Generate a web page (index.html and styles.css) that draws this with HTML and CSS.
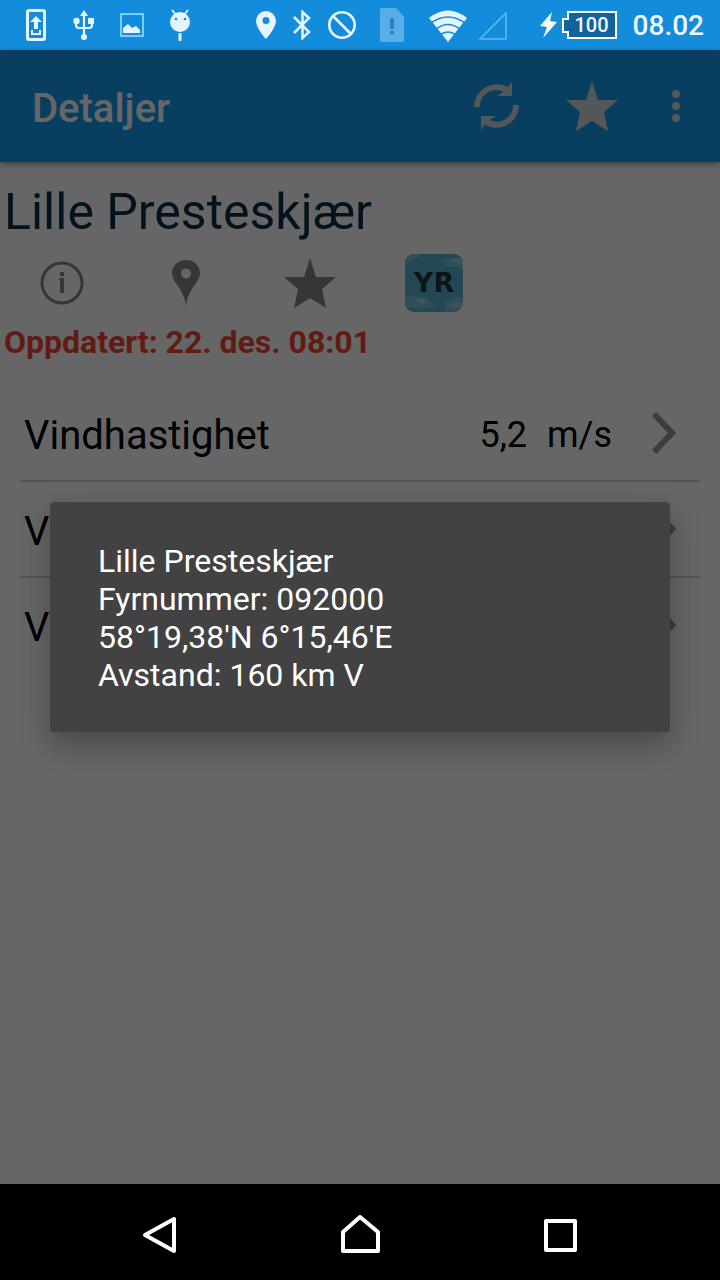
FILE: index.html
```html
<!DOCTYPE html>
<html lang="no">
<head>
    <meta charset="UTF-8">
    <meta name="viewport" content="width=device-width, initial-scale=1.0">
    <title>Detaljer</title>
    <link rel="stylesheet" href="styles.css">
</head>
<body>
    <svg class="defs" width="0" height="0">
        <symbol id="star" viewBox="0 0 52 50">
            <path d="M26 0L32 19H52L38 31L42 50L26 40L10 50L14 31L0 19H20Z"/>
        </symbol>
        <symbol id="chevron" viewBox="0 0 24 42">
            <path d="M2 2L20 21L2 40" fill="none" stroke="#999" stroke-width="6"/>
        </symbol>
    </svg>

    <div class="status-bar">
        <div class="notifications">
            <svg width="20" height="32" viewBox="0 0 20 32">
                <rect x="1.5" y="1.5" width="17" height="29" rx="1.5" fill="none" stroke="#e6f4fd" stroke-width="3"/>
                <path d="M10 7L16 13H12V20H8V13H4ZM5 21H7V24H13V21H15V26H5Z"/>
            </svg>
            <svg width="22" height="30" viewBox="0 0 22 30">
                <path d="M11 4V26M3 11V15Q3 18 6 18H16Q19 18 19 15V11" fill="none" stroke="#e6f4fd" stroke-width="2.2"/>
                <path d="M11 0L15 6H7Z"/>
                <circle cx="3.500" cy="11" r="3.200"/>
                <rect x="15" y="8" width="6" height="6"/>
                <circle cx="11" cy="27" r="3"/>
            </svg>
            <svg width="24" height="24" viewBox="0 0 24 24">
                <rect x="1" y="1" width="22" height="22" fill="none" stroke="#a4e2fa" stroke-width="1.5"/>
                <path d="M3 20V15L8 11L12 15L16 13L20 17V20Z"/>
            </svg>
            <svg width="22" height="33" viewBox="0 0 22 33">
                <path d="M3 1L7 6M19 1L15 6" stroke="#e6f4fd" stroke-width="2"/>
                <circle cx="11" cy="13" r="10"/>
                <rect x="9.500" y="24" width="3" height="8" rx="1"/>
                <circle cx="7" cy="10" r="1.3" fill="#148cdc"/>
                <circle cx="16" cy="10" r="1.3" fill="#148cdc"/>
            </svg>
        </div>
        <div class="system">
            <svg width="20" height="28" viewBox="0 0 20 28">
                <path fill-rule="evenodd" d="M10 0A10 10 0 0 1 20 10C20 17 10 28 10 28S0 17 0 10A10 10 0 0 1 10 0ZM10 6A3.5 3.5 0 1 0 10 13A3.5 3.5 0 1 0 10 6Z"/>
            </svg>
            <svg width="20" height="30" viewBox="0 0 20 30">
                <path d="M2 7L17 22L10.500 28V2L17 8L2 23" fill="none" stroke="#e6f4fd" stroke-width="2.500"/>
            </svg>
            <svg width="28" height="28" viewBox="0 0 28 28">
                <circle cx="14" cy="14" r="12.700" fill="none" stroke="#e6f4fd" stroke-width="2.600"/>
                <path d="M5 5L23 23" stroke="#e6f4fd" stroke-width="2.600"/>
            </svg>
            <svg width="40" height="34" viewBox="0 0 40 34">
                <path d="M10 0H24L32 9V32Q32 34 30 34H10Q8 34 8 32V2Q8 0 10 0Z" fill="#5aaee8"/>
                <path d="M18 10H22V21H18ZM18 23H22V26H18Z" fill="#2386ca"/>
            </svg>
            <div class="signals">
                <svg width="40" height="33" viewBox="0 0 40 33">
                    <path d="M1 9Q20 -6 39 9L20 33Z"/>
                    <path d="M3 14Q20 2 37 14M8 20Q20 11 32 20M12 26Q20 20 28 26" fill="none" stroke="#148cdc" stroke-width="1.600"/>
                </svg>
                <svg width="30" height="30" viewBox="0 0 30 30">
                    <path d="M2 29L28 3V29Z" fill="none" stroke="#5db9f2" stroke-width="1.600"/>
                </svg>
            </div>
            <div class="power">
                <svg width="17" height="26" viewBox="0 0 17 26">
                    <path d="M12 0L0 14L7 15L3 26L17 10L10 9Z"/>
                </svg>
                <span class="battery">
                    <svg width="55" height="28" viewBox="0 0 55 28">
                        <path d="M6 1H54V27H6V21H1V8H6Z" fill="#12639d" stroke="#fff" stroke-width="2"/>
                    </svg>
                    <span class="battery-level">100</span>
                </span>
            </div>
            <span class="clock">08.02</span>
        </div>
    </div>

    <div class="screen">
        <header class="app-bar">
            <h1>Detaljer</h1>
            <button class="action" aria-label="Oppdater">
                <svg width="45" height="48" viewBox="0 0 45 48">
                    <g id="arrow">
                        <path d="M3 25A19.500 19.500 0 0 1 34 9" fill="none" stroke="#d3d9dc" stroke-width="6"/>
                        <path d="M38 0V14H23L31 9Z"/>
                    </g>
                    <use href="#arrow" transform="rotate(180 22.500 24)"/>
                </svg>
            </button>
            <button class="action" aria-label="Favoritt">
                <svg width="52" height="50"><use href="#star"/></svg>
            </button>
            <button class="action more" aria-label="Meny">
                <svg width="8" height="32" viewBox="0 0 8 32">
                    <circle cx="4" cy="4" r="4"/>
                    <circle cx="4" cy="16" r="4"/>
                    <circle cx="4" cy="28" r="4"/>
                </svg>
            </button>
        </header>

        <main>
            <h2>Lille Presteskjær</h2>
            <div class="tools">
                <button aria-label="Info">
                    <svg width="44" height="44" viewBox="0 0 44 44">
                        <circle cx="22" cy="22" r="20" fill="none" stroke="#888" stroke-width="3"/>
                        <path d="M20 11H24V15H20ZM19 17H24V32H20V19H19Z"/>
                    </svg>
                </button>
                <button aria-label="Kart">
                    <svg width="28" height="46" viewBox="0 0 28 46">
                        <path fill-rule="evenodd" d="M14 0C22 0 28 6 28 13C28 23 16 28 14 46C12 28 0 23 0 13C0 6 6 0 14 0ZM14 8.500A5 5 0 1 0 14 18.500A5 5 0 1 0 14 8.500Z"/>
                    </svg>
                </button>
                <button aria-label="Favoritt">
                    <svg width="52" height="50"><use href="#star"/></svg>
                </button>
                <button aria-label="YR">
                    <svg width="60" height="60" viewBox="0 0 60 60">
                        <defs>
                            <clipPath id="tile"><rect x="1" y="1" width="58" height="57" rx="9"/></clipPath>
                        </defs>
                        <rect x="1" y="2" width="58" height="57" rx="9" fill="#a09c98"/>
                        <g clip-path="url(#tile)">
                            <rect width="60" height="60" fill="#58b4d4"/>
                            <path d="M0 0H18Q14 6 8 7Q4 12 0 12ZM36 8Q42 3 48 6L60 3V18Q52 12 46 14Q40 14 36 8ZM0 44Q8 39 14 45Q22 42 26 49L36 53Q22 58 0 54ZM40 50Q48 42 60 46V58H42Z" fill="#78c2dc"/>
                            <path d="M46 7Q53 2 60 7V13Q52 9 46 7ZM12 46Q18 43 23 50Q16 53 12 46ZM44 54Q52 48 60 50V56Z" fill="#a0d0e0"/>
                        </g>
                        <text class="logo-text" x="30" y="39" text-anchor="middle">YR</text>
                    </svg>
                </button>
            </div>
            <p class="updated">Oppdatert: 22. des. 08:01</p>
            <ul class="readings">
                <li>
                    <a href="#">
                        <span class="name">Vindhastighet</span>
                        <span class="value">5,2</span>
                        <span class="unit">m/s</span>
                        <svg width="24" height="42"><use href="#chevron"/></svg>
                    </a>
                </li>
                <li>
                    <a href="#">
                        <span class="name">V</span>
                        <svg width="24" height="42"><use href="#chevron"/></svg>
                    </a>
                </li>
                <li>
                    <a href="#">
                        <span class="name">V</span>
                        <svg width="24" height="42"><use href="#chevron"/></svg>
                    </a>
                </li>
            </ul>
        </main>

        <div class="scrim">
            <div class="dialog" role="dialog">
                Lille Presteskjær<br>
                Fyrnummer: 092000<br>
                58°19,38'N 6°15,46'E<br>
                Avstand: 160 km V
            </div>
        </div>
    </div>

    <nav class="nav-bar">
        <button aria-label="Tilbake">
            <svg width="40" height="40" viewBox="0 0 40 40"><path d="M5 20L34 4V36Z"/></svg>
        </button>
        <button aria-label="Hjem">
            <svg width="40" height="40" viewBox="0 0 40 40"><path d="M20 2L38 17V36H3V17Z"/></svg>
        </button>
        <button aria-label="Oversikt">
            <svg width="40" height="40" viewBox="0 0 40 40"><path d="M6 6H35V35H6Z"/></svg>
        </button>
    </nav>
</body>
</html>
```
FILE: styles.css
```css
*{
    box-sizing: border-box;
}
body{
    margin: 0;
    min-height: 100vh;
    display: flex;
    flex-direction: column;
    font-family: Roboto, "Noto Sans", sans-serif;
    background: #fff;
}
h1, h2, p, ul{
    margin: 0;
    padding: 0;
}
button{
    display: flex;
    align-items: center;
    justify-content: center;
    padding: 0;
    border: none;
    background: none;
    cursor: pointer;
}
svg{
    display: block;
    flex: none;
}
.defs{
    position: absolute;
}

/* status bar */
.status-bar{
    display: flex;
    justify-content: space-between;
    align-items: center;
    height: 50px;
    padding: 0 16px 0 12px;
    background: #148cdc;
    color: #f0f8fe;
    fill: #e6f4fd;
}
.notifications{
    display: grid;
    grid-template-columns: repeat(4, 48px);
    align-items: center;
    justify-items: center;
}
.system{
    display: flex;
    align-items: center;
    gap: 16px;
}
.signals{
    display: flex;
    align-items: center;
    gap: 10px;
}
.power{
    display: flex;
    align-items: center;
    gap: 5px;
    margin-left: 16px;
    fill: #fff;
}
.battery{
    display: grid;
    align-items: center;
}
.battery svg, .battery-level{
    grid-area: 1 / 1;
}
.battery-level{
    padding-left: 5px;
    text-align: center;
    font-size: 20px;
    font-weight: 500;
    line-height: 28px;
}
.clock{
    padding-top: 2px;
    font-size: 28px;
    font-weight: 500;
    line-height: 48px;
}

/* app */
.screen{
    position: relative;
    flex: 1;
}
.app-bar{
    display: flex;
    align-items: center;
    height: 112px;
    padding: 0 8px 0 32px;
    background: #149df0;
    color: #fff;
    fill: #d3d9dc;
    box-shadow: 0 2px 6px rgba(0,0,0,.4);
}
.app-bar h1{
    flex: 1;
    padding-top: 6px;
    font-size: 40px;
    font-weight: 500;
    line-height: 48px;
}
.action{
    width: 96px;
    height: 96px;
    fill: inherit;
}
.more{
    width: 72px;
}
main{
    padding-top: 20px;
}
h2{
    padding-left: 4px;
    font-size: 50px;
    font-weight: 400;
    line-height: 60px;
    color: #053049;
}
.tools{
    display: flex;
    fill: #888;
}
.tools button{
    width: 124px;
    height: 82px;
    fill: inherit;
}
.logo-text{
    font-family: "DejaVu Sans", sans-serif;
    font-size: 27px;
    font-weight: 700;
    fill: #26343a;
}
.updated{
    padding-left: 4px;
    font-size: 32px;
    font-weight: 700;
    line-height: 36px;
    color: #f44336;
}
.readings{
    margin: 26px 20px 0;
    list-style: none;
}
.readings li{
    height: 96px;
    border-bottom: 2px solid #d2d2d2;
}
.readings li:last-child{
    border-bottom: none;
}
.readings a{
    display: flex;
    align-items: center;
    height: 94px;
    padding: 0 24px 0 4px;
    color: #000;
    text-decoration: none;
}
.readings span{
    padding-top: 4px;
}
.name{
    flex: 1;
    font-size: 40px;
}
.value, .unit{
    font-size: 36px;
}
.unit{
    margin: 0 40px 0 20px;
}

/* popup */
.scrim{
    position: absolute;
    inset: 0;
    display: flex;
    align-items: center;
    background: rgba(0,0,0,.6);
}
.dialog{
    flex: 1;
    margin: 0 50px;
    padding: 40px 48px 38px;
    border-radius: 4px;
    background: #424242;
    color: #fff;
    font-size: 32px;
    line-height: 38px;
    box-shadow: 0 12px 30px rgba(0,0,0,.3);
}

/* navigation */
.nav-bar{
    display: flex;
    justify-content: center;
    align-items: center;
    height: 96px;
    padding-top: 6px;
    background: #000;
}
.nav-bar button{
    width: 200px;
    height: 90px;
}
.nav-bar path{
    fill: none;
    stroke: #fff;
    stroke-width: 4;
    stroke-linejoin: round;
}
```
